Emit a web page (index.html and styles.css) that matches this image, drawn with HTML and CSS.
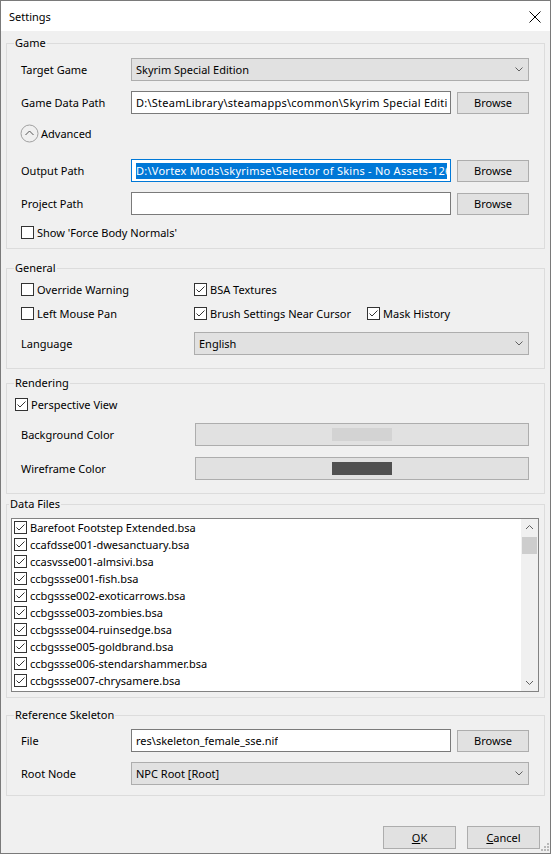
FILE: index.html
```html
<!DOCTYPE html>
<html lang="en">
<head>
    <meta charset="UTF-8">
    <title>Settings</title>
    <link rel="stylesheet" href="styles.css">
</head>
<body>

    <div class="window">
        <div class="title-bar">
            <span class="title">Settings</span>
            <svg class="close" width="12" height="12" viewBox="0 0 12 12">
                <path d="M0.5 0.5 L11.5 11.5 M11.5 0.5 L0.5 11.5" stroke="#000" stroke-width="1" fill="none"/>
            </svg>
        </div>

        <div class="content">
            <!-- Game -->
            <fieldset class="group">
                <legend>Game</legend>
                <div class="group-body game-body">
                    <div class="row row-first">
                        <span class="label">Target Game</span>
                        <div class="combo"><span>Skyrim Special Edition</span>
                            <svg width="8" height="5" viewBox="0 0 8 5"><path d="M0.5 0.5 L4 4 L7.5 0.5" stroke="#606060" fill="none"/></svg>
                        </div>
                    </div>
                    <div class="row row-path">
                        <span class="label">Game Data Path</span>
                        <div class="text-field"><span class="value long-path">D:\SteamLibrary\steamapps\common\Skyrim Special Edition</span></div>
                        <div class="button browse">Browse</div>
                    </div>
                    <div class="advanced">
                        <svg width="19" height="19" viewBox="0 0 19 19">
                            <circle cx="9.5" cy="9.5" r="8.5" stroke="#a0a0a0" fill="none"/>
                            <path d="M5.5 11 L9.5 7 L13.5 11" stroke="#555" fill="none"/>
                        </svg>
                        <span>Advanced</span>
                    </div>
                    <div class="row row-output">
                        <span class="label">Output Path</span>
                        <div class="text-field focused"><span class="value long-path selected">D:\Vortex Mods\skyrimse\Selector of Skins - No Assets-1260-1-0</span></div>
                        <div class="button browse">Browse</div>
                    </div>
                    <div class="row row-project">
                        <span class="label">Project Path</span>
                        <div class="text-field"></div>
                        <div class="button browse">Browse</div>
                    </div>
                    <label class="check row-normals"><span class="box"></span>Show 'Force Body Normals'</label>
                </div>
            </fieldset>

            <!-- General -->
            <fieldset class="group general">
                <legend>General</legend>
                <div class="group-body general-body">
                    <div class="check-row row-first">
                        <label class="check col"><span class="box"></span>Override Warning</label>
                        <label class="check col"><span class="box checked"><svg width="11" height="11" viewBox="0 0 11 11"><path d="M1.5 5.5 L4 8 L9.5 2.5" stroke="#333" fill="none"/></svg></span>BSA Textures</label>
                    </div>
                    <div class="check-row row-second">
                        <label class="check col"><span class="box"></span>Left Mouse Pan</label>
                        <label class="check col"><span class="box checked"><svg width="11" height="11" viewBox="0 0 11 11"><path d="M1.5 5.5 L4 8 L9.5 2.5" stroke="#333" fill="none"/></svg></span>Brush Settings Near Cursor</label>
                        <label class="check"><span class="box checked"><svg width="11" height="11" viewBox="0 0 11 11"><path d="M1.5 5.5 L4 8 L9.5 2.5" stroke="#333" fill="none"/></svg></span>Mask History</label>
                    </div>
                    <div class="row row-language">
                        <span class="label wide">Language</span>
                        <div class="combo"><span>English</span>
                            <svg width="8" height="5" viewBox="0 0 8 5"><path d="M0.5 0.5 L4 4 L7.5 0.5" stroke="#606060" fill="none"/></svg>
                        </div>
                    </div>
                </div>
            </fieldset>

            <!-- Rendering -->
            <fieldset class="group rendering">
                <legend>Rendering</legend>
                <div class="group-body rendering-body">
                    <label class="check perspective"><span class="box checked"><svg width="11" height="11" viewBox="0 0 11 11"><path d="M1.5 5.5 L4 8 L9.5 2.5" stroke="#333" fill="none"/></svg></span>Perspective View</label>
                    <div class="row row-bg">
                        <span class="label wide">Background Color</span>
                        <div class="color-button"><span class="swatch" style="background-color: #d3d3d3"></span></div>
                    </div>
                    <div class="row row-wire">
                        <span class="label wide">Wireframe Color</span>
                        <div class="color-button"><span class="swatch" style="background-color: #505050"></span></div>
                    </div>
                </div>
            </fieldset>

            <!-- Data Files -->
            <fieldset class="group data-files">
                <legend>Data Files</legend>
                <div class="group-body files-body">
                    <div class="list">
                        <ul class="items" id="file-list"></ul>
                        <div class="scrollbar">
                            <svg class="arrow" width="17" height="17" viewBox="0 0 17 17"><path d="M5 10 L8.5 6.5 L12 10" stroke="#606060" fill="none"/></svg>
                            <div class="track"><div class="thumb"></div></div>
                            <svg class="arrow" width="17" height="17" viewBox="0 0 17 17"><path d="M5 7 L8.5 10.5 L12 7" stroke="#606060" fill="none"/></svg>
                        </div>
                    </div>
                </div>
            </fieldset>

            <!-- Reference Skeleton -->
            <fieldset class="group skeleton">
                <legend>Reference Skeleton</legend>
                <div class="group-body skeleton-body">
                    <div class="row row-file">
                        <span class="label">File</span>
                        <div class="text-field"><span class="value">res\skeleton_female_sse.nif</span></div>
                        <div class="button browse">Browse</div>
                    </div>
                    <div class="row row-root">
                        <span class="label">Root Node</span>
                        <div class="combo"><span>NPC Root [Root]</span>
                            <svg width="8" height="5" viewBox="0 0 8 5"><path d="M0.5 0.5 L4 4 L7.5 0.5" stroke="#606060" fill="none"/></svg>
                        </div>
                    </div>
                </div>
            </fieldset>

            <div class="footer">
                <div class="button dialog-btn"><u>O</u>K</div>
                <div class="button dialog-btn"><u>C</u>ancel</div>
            </div>
        </div>

        <svg class="grip" width="8" height="8" viewBox="0 0 8 8">
            <rect x="6" y="0" width="2" height="2" fill="#b8b8b8"/>
            <rect x="3" y="3" width="2" height="2" fill="#b8b8b8"/>
            <rect x="6" y="3" width="2" height="2" fill="#b8b8b8"/>
            <rect x="0" y="6" width="2" height="2" fill="#b8b8b8"/>
            <rect x="3" y="6" width="2" height="2" fill="#b8b8b8"/>
            <rect x="6" y="6" width="2" height="2" fill="#b8b8b8"/>
        </svg>
    </div>

    <script>
        const files = [
            "Barefoot Footstep Extended.bsa",
            "ccafdsse001-dwesanctuary.bsa",
            "ccasvsse001-almsivi.bsa",
            "ccbgssse001-fish.bsa",
            "ccbgssse002-exoticarrows.bsa",
            "ccbgssse003-zombies.bsa",
            "ccbgssse004-ruinsedge.bsa",
            "ccbgssse005-goldbrand.bsa",
            "ccbgssse006-stendarshammer.bsa",
            "ccbgssse007-chrysamere.bsa"
        ];

        // Build the checked list of archives
        const list = document.getElementById('file-list');
        files.forEach(function(name) {
            const li = document.createElement('li');
            li.innerHTML = '<span class="box checked"><svg width="11" height="11" viewBox="0 0 11 11">' +
                '<path d="M1.5 5.5 L4 8 L9.5 2.5" stroke="#333" fill="none"/></svg></span>' + name;
            list.appendChild(li);
        });
    </script>

</body>
</html>
```

FILE: styles.css
```css
body {
    margin: 0;
    font-family: "Noto Sans", sans-serif;
    font-size: 11px;
    color: #000;
    background-color: #fff;
}
.window {
    position: relative;
    width: 551px;
    height: 854px;
    box-sizing: border-box;
    border: 1px solid #7a7a7a;
    background-color: #f0f0f0;
    display: flex;
    flex-direction: column;
}
.title-bar {
    height: 30px;
    background-color: #fff;
    display: flex;
    align-items: center;
    justify-content: space-between;
    padding: 0 9px 0 8px;
}
.title {
    margin-top: 1px;
}
.close {
    margin-top: 1px;
}
.content {
    padding: 4px 5px 0 5px;
}

/* Group boxes */
.group {
    margin: 0;
    padding: 0;
    border: 1px solid #dcdcdc;
    min-width: 0;
}
.group legend {
    padding: 0 1px;
    margin-left: 7px;
    line-height: 16px;
}
.general {
    margin-top: 11px;
}
.rendering {
    margin-top: 6px;
}
.data-files {
    margin-top: 2px;
}
.data-files legend {
    margin-left: 2px;
}
.skeleton {
    margin-top: 9px;
}
.group-body {
    padding: 0 15px 0 14px;
}
.game-body {
    padding-bottom: 9px;
}
.general-body {
    padding-bottom: 13px;
}
.rendering-body {
    padding-bottom: 13px;
}
.files-body {
    padding: 6px 5px 5px 4px;
}
.skeleton-body {
    padding-bottom: 10px;
}

/* Rows */
.row {
    display: flex;
    align-items: center;
    height: 23px;
}
.row-first {
    margin-top: 7px;
}
.row-path {
    margin-top: 10px;
}
.row-output {
    margin-top: 16px;
}
.row-project {
    margin-top: 10px;
}
.row-normals {
    margin-top: 11px;
}
.label {
    width: 110px;
    flex-shrink: 0;
}
.label.wide {
    width: 173px;
}
.text-field {
    flex: 1;
    min-width: 0;
    height: 23px;
    box-sizing: border-box;
    border: 1px solid #7a7a7a;
    background-color: #fff;
    padding: 0 3px 0 4px;
    display: flex;
    align-items: center;
}
.text-field.focused {
    border-color: #0078d7;
}
.value {
    display: block;
    min-width: 0;
    overflow: hidden;
    white-space: nowrap;
}
.long-path {
    letter-spacing: 0.25px;
}
.selected {
    background-color: #0078d7;
    color: #fff;
    line-height: 16px;
}
.combo {
    flex: 1;
    height: 23px;
    box-sizing: border-box;
    border: 1px solid #adadad;
    background-color: #e1e1e1;
    display: flex;
    align-items: center;
    justify-content: space-between;
    padding: 0 5px 0 4px;
}
.button {
    height: 22px;
    box-sizing: border-box;
    border: 1px solid #adadad;
    background-color: #e1e1e1;
    display: flex;
    align-items: center;
    justify-content: center;
}
.browse {
    width: 72px;
    margin-left: 6px;
    flex-shrink: 0;
}

/* Advanced toggle */
.advanced {
    display: flex;
    align-items: center;
    gap: 2px;
    height: 19px;
    margin-top: 10px;
    margin-left: -1px;
}

/* Checkboxes */
.check {
    display: flex;
    align-items: center;
    height: 17px;
}
.box {
    width: 13px;
    height: 13px;
    box-sizing: border-box;
    border: 1px solid #333;
    background-color: #fff;
    margin-right: 3px;
    flex-shrink: 0;
    display: flex;
    align-items: center;
    justify-content: center;
}
.check-row {
    display: flex;
    align-items: center;
    height: 17px;
}
.check-row.row-first {
    margin-top: 5px;
}
.check-row.row-second {
    margin-top: 7px;
}
.col {
    width: 173px;
}
.row-language {
    margin-top: 10px;
}
.check.row-normals {
    height: 13px;
}

/* Rendering */
.perspective {
    margin-top: 5px;
    margin-left: -6px;
}
.row-bg {
    margin-top: 10px;
}
.row-wire {
    margin-top: 11px;
}
.color-button {
    flex: 1;
    margin-left: 1px;
    height: 23px;
    box-sizing: border-box;
    border: 1px solid #adadad;
    background-color: #e1e1e1;
    display: flex;
    align-items: center;
    justify-content: center;
}
.swatch {
    width: 60px;
    height: 13px;
}

/* Data file list */
.list {
    height: 174px;
    box-sizing: border-box;
    border: 1px solid #828282;
    background-color: #fff;
    display: flex;
}
.items {
    list-style: none;
    margin: 0;
    padding: 0 0 0 2px;
    flex: 1;
    overflow: hidden;
}
.items li {
    height: 17px;
    display: flex;
    align-items: center;
    white-space: nowrap;
}
.scrollbar {
    width: 17px;
    display: flex;
    flex-direction: column;
    background-color: #f0f0f0;
}
.track {
    flex: 1;
}
.thumb {
    height: 17px;
    margin: 1px 1px 0 1px;
    background-color: #cdcdcd;
}

/* Reference skeleton */
.row-file {
    margin-top: 6px;
}
.row-root {
    margin-top: 10px;
}

/* Footer buttons */
.footer {
    display: flex;
    justify-content: flex-end;
    gap: 11px;
    margin-top: 30px;
    padding-right: 5px;
}
.dialog-btn {
    width: 73px;
    height: 23px;
}
.grip {
    position: absolute;
    right: 1px;
    bottom: 2px;
}
```
